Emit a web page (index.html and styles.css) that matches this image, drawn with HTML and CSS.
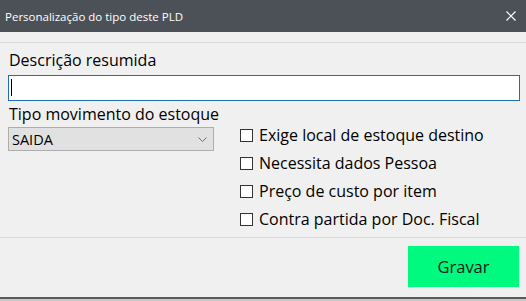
FILE: index.html
```html
<!DOCTYPE html>
<html lang="pt">
<head>
  <meta charset="UTF-8">
  <title>Personalização do tipo deste PLD</title>
  <link rel="stylesheet" href="styles.css">
</head>
<body>
  <div class="window">
    <div class="titlebar">
      <span class="title">Personalização do tipo deste PLD</span>
      <svg class="close" width="10" height="10" viewBox="0 0 10 10"><path d="M0.5 0.5 L9.5 9.5 M9.5 0.5 L0.5 9.5" stroke="#fff" stroke-width="1.2"/></svg>
    </div>
    <div class="menu-gap"></div>
    <div class="content">
      <label class="label">Descrição resumida</label>
      <div class="input"><span class="caret"></span></div>
      <div class="row">
        <div class="left">
          <label class="label">Tipo movimento do estoque</label>
          <div class="select">
            <span>SAIDA</span>
            <svg width="9" height="5" viewBox="0 0 9 5"><path d="M0.5 0.5 L4.5 4.5 L8.5 0.5" fill="none" stroke="#707070" stroke-width="1"/></svg>
          </div>
        </div>
        <div class="checks">
          <div class="check"><span class="box"></span>Exige local de estoque destino</div>
          <div class="check"><span class="box"></span>Necessita dados Pessoa</div>
          <div class="check"><span class="box"></span>Preço de custo por item</div>
          <div class="check"><span class="box"></span>Contra partida por Doc. Fiscal</div>
        </div>
      </div>
    </div>
    <div class="footer">
      <button class="save">Gravar</button>
    </div>
    <div class="bottom"></div>
  </div>
</body>
</html>
```

FILE: styles.css
```css
body {
  margin: 0;
  font-family: "Open Sans", "Noto Sans", sans-serif;
  color: #000;
}
.window {
  width: 526px;
  height: 301px;
  background: #f0f0f0;
  display: flex;
  flex-direction: column;
}
.titlebar {
  height: 32px;
  background: #4b5157;
  display: flex;
  align-items: center;
  justify-content: space-between;
  padding: 0 10px 0 5px;
  box-sizing: border-box;
}
.title {
  color: #fff;
  font-size: 11.5px;
}
.menu-gap {
  height: 10px;
  border-bottom: 1px solid #dadada;
}
.content {
  padding: 7px 6px 0 8px;
  height: 194px;
  box-sizing: border-box;
}
.label {
  display: block;
  font-size: 16px;
  line-height: 21px;
  padding-left: 1px;
}
.input {
  height: 26px;
  margin-top: 4px;
  border: 1px solid #1f6fb8;
  background: #fff;
  box-sizing: border-box;
  padding: 3px 2px;
}
.caret {
  display: block;
  width: 1px;
  height: 17px;
  background: #000;
}
.row {
  display: flex;
  margin-top: 3px;
}
.left {
  width: 232px;
}
.select {
  width: 206px;
  height: 24px;
  margin-top: 2px;
  background: #e1e1e1;
  border: 1px solid #adadad;
  box-sizing: border-box;
  display: flex;
  align-items: center;
  justify-content: space-between;
  padding: 0 6px 0 3px;
  font-size: 14.5px;
}
.checks {
  padding-top: 21px;
  display: flex;
  flex-direction: column;
  gap: 8px;
}
.check {
  display: flex;
  align-items: center;
  height: 20px;
  font-size: 16px;
}
.box {
  width: 11px;
  height: 11px;
  border: 1px solid #333;
  background: #fff;
  margin-right: 6px;
}
.footer {
  flex: 1;
  border-top: 1px solid #dadada;
  display: flex;
  justify-content: flex-end;
  align-items: flex-start;
  padding: 8px 7px 0 0;
}
.save {
  width: 111px;
  height: 41px;
  background: #00fa7f;
  border: none;
  font-family: inherit;
  font-size: 16.5px;
  color: #1a1a1a;
}
.bottom {
  height: 2px;
  border-top: 2px solid #5a5a5a;
  background: #c8c8c8;
}
```
